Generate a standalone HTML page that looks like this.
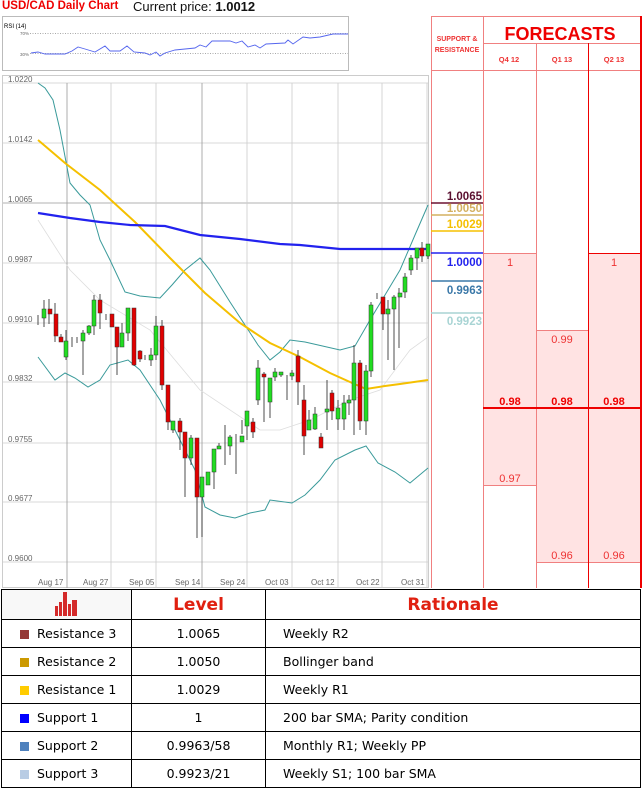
<!DOCTYPE html>
<html><head><meta charset="utf-8"><style>
body{margin:0;width:642px;height:788px;background:#fff;position:relative;font-family:"Liberation Sans",sans-serif;overflow:hidden}
.a{position:absolute}
table{border-collapse:collapse;position:absolute;left:1px;top:589px;width:640px;font-family:"DejaVu Sans",sans-serif;font-size:12.5px}
td{border:1px solid #000;height:27px;padding:0}
.sq{display:inline-block;width:9px;height:9px;margin:0 8px 0 18px;vertical-align:-1px}
</style></head><body>
<div class="a" style="left:2px;top:0px;font-size:11.5px;font-weight:bold;color:#e00">USD/CAD Daily Chart</div>
<div class="a" style="left:133px;top:-1px;font-size:13px;color:#111">Current price: <b>1.0012</b></div>
<svg class="a" style="left:0;top:0" width="642" height="588">
<rect x="2.5" y="16.5" width="346" height="54" fill="#fff" stroke="#bbb"/>
<text x="4" y="28" font-size="6" font-family="Liberation Sans">RSI (14)</text>
<text x="20" y="35" font-size="4.5" fill="#666">70%</text><text x="20" y="56" font-size="4.5" fill="#666">30%</text>
<line x1="30" y1="33.5" x2="348" y2="33.5" stroke="#555" stroke-dasharray="1,1.5" stroke-width=".6"/>
<line x1="30" y1="53.5" x2="348" y2="53.5" stroke="#555" stroke-dasharray="1,1.5" stroke-width=".6"/>
<polyline fill="none" stroke="#5566ee" stroke-width=".9" points="31,53 38,52 45,54 65,54 72,51 78,47 85,49 95,52 105,46 110,51 120,51 127,46 134,52 145,53 150,55 156,52 160,56 165,53 175,50 195,48 200,45 206,47 212,41 230,41 236,43 242,41 248,47 255,45 260,48 266,44 285,43 288,40 293,44 303,37 310,38 320,37 333,34 348,34"/>
<rect x="2.5" y="75.5" width="426" height="512" fill="#fff" stroke="#ccc"/>
<g stroke="#ccc" stroke-width=".8">
<line x1="3" y1="83" x2="428" y2="83"/><line x1="3" y1="143" x2="428" y2="143"/><line x1="3" y1="203" x2="428" y2="203" stroke="#999"/><line x1="3" y1="263" x2="428" y2="263"/><line x1="3" y1="323" x2="428" y2="323"/><line x1="3" y1="382" x2="428" y2="382"/><line x1="3" y1="443" x2="428" y2="443"/><line x1="3" y1="502" x2="428" y2="502"/><line x1="3" y1="562" x2="428" y2="562"/>
<line x1="67" y1="83" x2="67" y2="588" stroke="#999"/><line x1="111" y1="83" x2="111" y2="588"/><line x1="156" y1="83" x2="156" y2="588"/><line x1="202" y1="83" x2="202" y2="588" stroke="#999"/><line x1="247" y1="83" x2="247" y2="588"/><line x1="292" y1="83" x2="292" y2="588"/><line x1="338" y1="83" x2="338" y2="588"/><line x1="382" y1="83" x2="382" y2="588"/><line x1="427" y1="83" x2="427" y2="588"/>
</g>
<g font-size="8" fill="#666" font-family="Liberation Sans">
<text x="8" y="82">1.0220</text><text x="8" y="142">1.0142</text><text x="8" y="202">1.0065</text><text x="8" y="262">0.9987</text><text x="8" y="322">0.9910</text><text x="8" y="381">0.9832</text><text x="8" y="442">0.9755</text><text x="8" y="501">0.9677</text><text x="8" y="561">0.9600</text>
<text x="38" y="585">Aug 17</text><text x="83" y="585">Aug 27</text><text x="129" y="585">Sep 05</text><text x="175" y="585">Sep 14</text><text x="220" y="585">Sep 24</text><text x="265" y="585">Oct 03</text><text x="311" y="585">Oct 12</text><text x="356" y="585">Oct 22</text><text x="401" y="585">Oct 31</text>
</g>
<polyline fill="none" stroke="#ddd" stroke-width=".8" points="38,220 70,270 100,300 150,330 200,390 260,430 280,430 310,420 350,400 380,390 410,350 428,337"/>
<polyline fill="none" stroke="#3a9a9a" stroke-width="1" points="38,83 45,88 53,100 60,130 70,183 80,195 90,205 100,240 110,260 125,292 140,296 160,298 172,285 185,270 200,258 210,270 230,302 245,325 258,345 270,360 280,352 290,340 305,342 340,350 355,346 370,320 385,295 400,270 415,235 428,205"/>
<polyline fill="none" stroke="#3a9a9a" stroke-width="1" points="38,357 55,380 65,373 75,378 88,387 100,380 110,365 128,360 140,370 160,400 175,430 195,470 205,507 220,515 235,518 250,513 265,510 270,500 292,503 305,495 320,480 335,460 355,450 366,446 378,463 395,472 410,483 428,468"/>
<polyline fill="none" stroke="#f5c000" stroke-width="2" points="38,140 65,163 100,190 135,222 170,258 205,293 240,323 270,343 300,357 330,373 350,382 366,389 385,386 400,384 428,380"/>
<polyline fill="none" stroke="#2222ee" stroke-width="2.2" points="38,213 70,218 100,222 130,225 165,226 200,235 240,239 280,244 300,245 340,249 380,249 428,249"/>
<g stroke="#222" stroke-width=".8">
<path d="M38 315v10M44 300v27M49 299v25M55 303v39M61 334v8M66 330v30M72 337v10M77 337v6M83 330v45M89 325v10M94 295v40M100 294v35M106 314v6M111 314v10M117 327v48M122 323v18M128 308v33M134 308v58M140 350v12M145 355v5M151 348v18M156 316v44M162 320v70M168 385v45M173 421v12M180 418v32M185 432v65M191 435v30M197 438v100M202 477v60M208 472v13M214 449v40M219 443v6M225 425v40M230 435v20M236 434v40M242 420v14M247 415v25M253 418v20M258 360v45M264 372v50M270 378v40M275 368v13M281 372v5M287 375v25M292 370v10M298 350v55M304 385v70M309 410v20M315 407v23M321 433v15M327 380v50M332 390v30M338 400v30M344 395v35M349 395v20M354 345v90M360 360v70M366 365v70M371 302v75M377 293v6M383 300v30M388 300v60M394 295v75M399 288v60M405 273v25M411 255v20M417 250v20M422 242v20M428 244v15"/>
</g>
<g fill="#e00000" stroke="#333" stroke-width=".5">
<rect x="48" y="309" width="4" height="5"/><rect x="54" y="314" width="4" height="22"/><rect x="59" y="337" width="4" height="5"/><rect x="98" y="300" width="4" height="13"/><rect x="110" y="314" width="4" height="13"/><rect x="115" y="327" width="4" height="20"/><rect x="132" y="308" width="4" height="57"/><rect x="138" y="351" width="4" height="8"/><rect x="160" y="326" width="4" height="59"/><rect x="166" y="385" width="4" height="37"/><rect x="178" y="421" width="4" height="11"/><rect x="183" y="432" width="4" height="26"/><rect x="195" y="438" width="4" height="59"/><rect x="251" y="422" width="4" height="10"/><rect x="262" y="374" width="4" height="3"/><rect x="296" y="356" width="4" height="26"/><rect x="302" y="400" width="4" height="36"/><rect x="319" y="437" width="4" height="11"/><rect x="330" y="393" width="4" height="18"/><rect x="358" y="363" width="4" height="58"/><rect x="381" y="297" width="4" height="17"/><rect x="420" y="248" width="4" height="8"/>
</g>
<g fill="#22dd22" stroke="#333" stroke-width=".5">
<rect x="42" y="309" width="4" height="9"/><rect x="64" y="341" width="4" height="16"/><rect x="81" y="333" width="4" height="8"/><rect x="87" y="326" width="4" height="7"/><rect x="92" y="300" width="4" height="26"/><rect x="120" y="333" width="4" height="14"/><rect x="126" y="308" width="4" height="25"/><rect x="149" y="355" width="4" height="5"/><rect x="154" y="326" width="4" height="29"/><rect x="171" y="421" width="4" height="9"/><rect x="189" y="438" width="4" height="20"/><rect x="200" y="477" width="4" height="20"/><rect x="206" y="472" width="4" height="13"/><rect x="212" y="449" width="4" height="23"/><rect x="217" y="446" width="4" height="3"/><rect x="228" y="437" width="4" height="9"/><rect x="240" y="436" width="4" height="6"/><rect x="245" y="411" width="4" height="15"/><rect x="256" y="368" width="4" height="32"/><rect x="268" y="378" width="4" height="24"/><rect x="273" y="372" width="4" height="5"/><rect x="279" y="372" width="4" height="3"/><rect x="290" y="373" width="4" height="3"/><rect x="307" y="420" width="4" height="10"/><rect x="313" y="414" width="4" height="15"/><rect x="325" y="409" width="4" height="3"/><rect x="336" y="408" width="4" height="11"/><rect x="342" y="403" width="4" height="16"/><rect x="347" y="400" width="4" height="3"/><rect x="352" y="363" width="4" height="37"/><rect x="364" y="371" width="4" height="50"/><rect x="369" y="305" width="4" height="66"/><rect x="386" y="309" width="4" height="5"/><rect x="392" y="297" width="4" height="12"/><rect x="398" y="293" width="4" height="4"/><rect x="403" y="277" width="4" height="15"/><rect x="409" y="258" width="4" height="12"/><rect x="415" y="248" width="4" height="10"/><rect x="426" y="244" width="4" height="12"/>
</g>
<rect x="483" y="253" width="53" height="232" fill="#ffe3e3"/>
<rect x="536" y="330" width="52" height="232" fill="#ffe3e3"/>
<rect x="588" y="253" width="53" height="309" fill="#ffe3e3"/>
<g stroke="#f08080" stroke-width="1">
<line x1="431.5" y1="16" x2="431.5" y2="588"/><line x1="483.5" y1="16" x2="483.5" y2="588"/><line x1="536.5" y1="43" x2="536.5" y2="588"/>
<line x1="431" y1="16.5" x2="641" y2="16.5"/><line x1="483" y1="43.5" x2="641" y2="43.5"/><line x1="431" y1="70.5" x2="641" y2="70.5"/>
<line x1="483" y1="253.5" x2="536" y2="253.5"/><line x1="483" y1="485.5" x2="536" y2="485.5"/><line x1="536" y1="330.5" x2="588" y2="330.5"/><line x1="536" y1="562.5" x2="641" y2="562.5"/>
</g>
<line x1="588.5" y1="43" x2="588.5" y2="588" stroke="#ee0000" stroke-width="1"/>
<line x1="641" y1="16" x2="641" y2="588" stroke="#ee0000" stroke-width="2"/>
<line x1="588" y1="253.5" x2="641" y2="253.5" stroke="#ee0000"/>
<line x1="483" y1="408" x2="641" y2="408" stroke="#ee0000" stroke-width="2"/>
<text x="457" y="41" font-size="7" font-weight="bold" fill="#e33" text-anchor="middle">SUPPORT &amp;</text>
<text x="457" y="52" font-size="7" font-weight="bold" fill="#e33" text-anchor="middle">RESISTANCE</text>
<text x="560" y="40" font-size="18" font-weight="bold" fill="#e00" text-anchor="middle">FORECASTS</text>
<g font-size="7.5" font-weight="bold" fill="#e33" text-anchor="middle"><text x="509" y="62">Q4 12</text><text x="562" y="62">Q1 13</text><text x="614" y="62">Q2 13</text></g>
<g font-size="11" fill="#e33" text-anchor="middle"><text x="510" y="266">1</text><text x="614" y="266">1</text><text x="562" y="343">0.99</text><text x="510" y="482">0.97</text><text x="562" y="559">0.96</text><text x="614" y="559">0.96</text></g>
<g font-size="11" font-weight="bold" fill="#e00" text-anchor="middle"><text x="510" y="405">0.98</text><text x="562" y="405">0.98</text><text x="614" y="405">0.98</text></g>
<g stroke-width="1.5"><line x1="431" y1="203" x2="483" y2="203" stroke="#6b1030"/><line x1="431" y1="215" x2="483" y2="215" stroke="#d4b060"/><line x1="431" y1="231" x2="483" y2="231" stroke="#f5c000"/><line x1="431" y1="253" x2="483" y2="253" stroke="#2222ee"/><line x1="431" y1="281" x2="483" y2="281" stroke="#3a78a8"/><line x1="431" y1="313" x2="483" y2="313" stroke="#a8d4d4"/></g>
<g font-size="11.5" font-weight="bold" text-anchor="end"><text x="482" y="200" fill="#5a1030">1.0065</text><text x="482" y="212" fill="#d4b060">1.0050</text><text x="482" y="228" fill="#f5c000">1.0029</text><text x="482" y="266" fill="#2222ee">1.0000</text><text x="482" y="294" fill="#3a78a8">0.9963</text><text x="482" y="325" fill="#a8d4d4">0.9923</text></g>
</svg>
<table>
<tr style="height:30px"><td style="width:129px;text-align:center;background:#f8f8f8"><svg width="26" height="26" viewBox="0 0 26 26"><g fill="#d42a2a"><rect x="1" y="16" width="3" height="10"/><rect x="5" y="12" width="3" height="14"/><rect x="9" y="2" width="4" height="24"/><rect x="14" y="14" width="3" height="12"/><rect x="18" y="10" width="5" height="16"/></g></svg></td>
<td style="width:133px;text-align:center;color:#e02010;font-weight:bold;font-size:17px">Level</td>
<td style="color:#e02010;font-weight:bold;font-size:17px;text-align:center">Rationale</td></tr>
<tr><td><span class="sq" style="background:#953735"></span>Resistance 3</td><td style="text-align:center">1.0065</td><td style="padding-left:17px">Weekly R2</td></tr>
<tr><td><span class="sq" style="background:#cc9900"></span>Resistance 2</td><td style="text-align:center">1.0050</td><td style="padding-left:17px">Bollinger band</td></tr>
<tr><td><span class="sq" style="background:#ffcc00"></span>Resistance 1</td><td style="text-align:center">1.0029</td><td style="padding-left:17px">Weekly R1</td></tr>
<tr><td><span class="sq" style="background:#0000ff"></span>Support 1</td><td style="text-align:center">1</td><td style="padding-left:17px">200 bar SMA; Parity condition</td></tr>
<tr><td><span class="sq" style="background:#4f81bd"></span>Support 2</td><td style="text-align:center">0.9963/58</td><td style="padding-left:17px">Monthly R1; Weekly PP</td></tr>
<tr><td><span class="sq" style="background:#b8cce4"></span>Support 3</td><td style="text-align:center">0.9923/21</td><td style="padding-left:17px">Weekly S1; 100 bar SMA</td></tr>
</table>
</body></html>
